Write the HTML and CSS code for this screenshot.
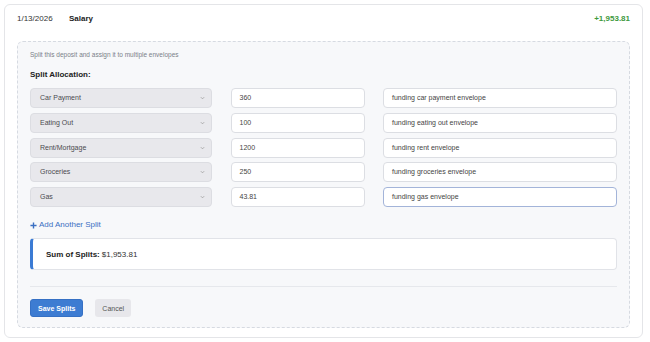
FILE: index.html
```html
<!DOCTYPE html>
<html>
<head>
<meta charset="utf-8">
<link rel="stylesheet" href="styles.css">
</head>
<body>
<div class="card">
  <div class="header">
    <span class="date">1/13/2026</span>
    <span class="payee">Salary</span>
    <span class="amount">+1,953.81</span>
  </div>
  <div class="panel">
    <div class="hint">Split this deposit and assign it to multiple envelopes</div>
    <div class="label">Split Allocation:</div>
    <div class="rows">
      <div class="select">Car Payment<svg class="chev" viewBox="0 0 6 4"><polyline points="1,1 3,3 5,1"/></svg></div>
      <div class="field">360</div>
      <div class="field">funding car payment envelope</div>

      <div class="select">Eating Out<svg class="chev" viewBox="0 0 6 4"><polyline points="1,1 3,3 5,1"/></svg></div>
      <div class="field">100</div>
      <div class="field">funding eating out envelope</div>

      <div class="select">Rent/Mortgage<svg class="chev" viewBox="0 0 6 4"><polyline points="1,1 3,3 5,1"/></svg></div>
      <div class="field">1200</div>
      <div class="field">funding rent envelope</div>

      <div class="select">Groceries<svg class="chev" viewBox="0 0 6 4"><polyline points="1,1 3,3 5,1"/></svg></div>
      <div class="field">250</div>
      <div class="field">funding groceries envelope</div>

      <div class="select">Gas<svg class="chev" viewBox="0 0 6 4"><polyline points="1,1 3,3 5,1"/></svg></div>
      <div class="field">43.81</div>
      <div class="field focus">funding gas envelope</div>
    </div>
    <div class="add"><svg class="plus" viewBox="0 0 8 8"><path d="M4 0.5V7.5M0.5 4H7.5"/></svg>Add Another Split</div>
    <div class="sum"><b>Sum of Splits:</b> $1,953.81</div>
    <div class="actions">
      <div class="btn save">Save Splits</div>
      <div class="btn cancel">Cancel</div>
    </div>
  </div>
</div>
</body>
</html>
```

FILE: styles.css
```css
html, body {
  margin: 0;
  padding: 0;
  background: #ffffff;
}
body {
  padding: 4px 7px 0 4px;
  font-family: "Liberation Sans", Arial, sans-serif;
  color: #222;
}
.card {
  border: 1px solid #e4e5e8;
  border-radius: 6px;
  padding: 9px 12px 9px;
  background: #fff;
}
.header {
  display: flex;
  align-items: center;
  font-size: 8px;
  line-height: 10px;
  height: 10px;
  margin-bottom: 17px;
}
.date {
  color: #333;
  width: 52px;
}
.payee {
  font-weight: bold;
  color: #222;
}
.amount {
  margin-left: auto;
  font-weight: bold;
  color: #3d9a3d;
}
.panel {
  border: 1px dashed #d6dae1;
  border-radius: 6px;
  background: #f7f8fa;
  padding: 9px 12px 10px;
}
.hint {
  font-size: 6.5px;
  line-height: 8px;
  color: #7a7f88;
}
.label {
  margin-top: 11px;
  font-size: 8px;
  line-height: 10px;
  font-weight: bold;
  color: #222;
}
.rows {
  margin-top: 8px;
  display: grid;
  grid-template-columns: 182px 134px 1fr;
  column-gap: 18.5px;
  row-gap: 4.75px;
}
.select, .field {
  box-sizing: border-box;
  height: 20px;
  border-radius: 4px;
  font-size: 7px;
  line-height: 18px;
  display: flex;
  align-items: center;
}
.select {
  background: #e8e8ec;
  border: 1px solid #dcdde2;
  padding: 0 6px 0 9px;
  color: #4a4a4f;
}
.chev {
  margin-left: auto;
  width: 5px;
  height: 4px;
  fill: none;
  stroke: #999;
  stroke-width: 0.9;
}
.field {
  background: #fff;
  border: 1px solid #dcdee3;
  padding: 0 8px;
  color: #444;
}
.field.focus {
  border-color: #a3b4d9;
}
.add {
  margin-top: 13px;
  display: flex;
  align-items: center;
  font-size: 8px;
  line-height: 10px;
  color: #3b6fc2;
}
.plus {
  width: 7px;
  height: 7px;
  margin-right: 2px;
  fill: none;
  stroke: #3b6fc2;
  stroke-width: 1.6;
}
.sum {
  margin-top: 8px;
  box-sizing: border-box;
  height: 32px;
  background: #fff;
  border: 1px solid #e1e3e8;
  border-left: 3px solid #3b7bd4;
  border-radius: 4px;
  padding: 0 13px;
  display: flex;
  align-items: center;
  font-size: 8px;
  color: #333;
}
.sum b {
  color: #222;
  margin-right: 2px;
}
.actions {
  margin-top: 16px;
  border-top: 1px solid #e6e8ec;
  padding-top: 12px;
  display: flex;
  gap: 12px;
}
.btn {
  box-sizing: border-box;
  height: 18px;
  border-radius: 3px;
  font-size: 7px;
  display: flex;
  align-items: center;
  padding: 0 7px;
}
.save {
  background: #3d7cd2;
  color: #fff;
  font-weight: bold;
  border: 1px solid #3570c4;
}
.cancel {
  background: #e7e7eb;
  color: #555;
}
```
